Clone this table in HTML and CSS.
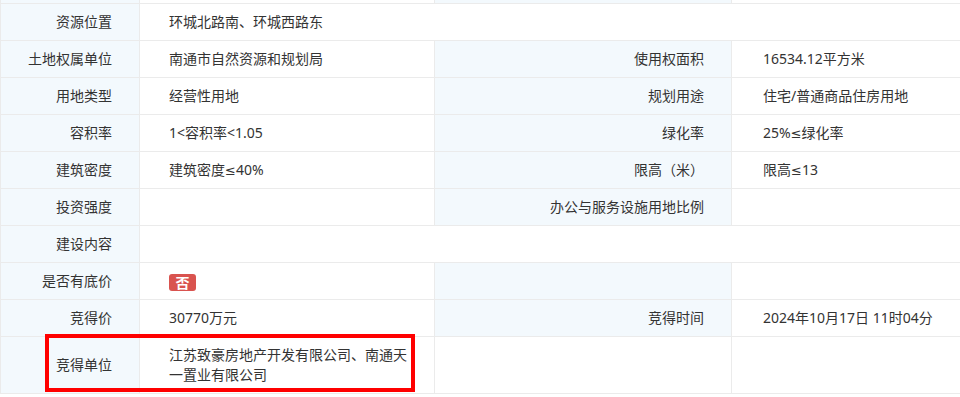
FILE: index.html
```html
<!DOCTYPE html>
<html lang="zh-CN">
<head>
<meta charset="utf-8">
<link rel="stylesheet" href="styles.css">
</head>
<body>
<div class="wrap">
<table class="info">
  <colgroup>
    <col class="c1"><col class="c2"><col class="c3"><col class="c4">
  </colgroup>
  <tr><td class="lb"></td><td class="v2"></td><td class="lb"></td><td class="v4"></td></tr>
  <tr><td class="lb">资源位置</td><td class="v2 last" colspan="3">环城北路南、环城西路东</td></tr>
  <tr><td class="lb">土地权属单位</td><td class="v2">南通市自然资源和规划局</td><td class="lb">使用权面积</td><td class="v4">16534.12平方米</td></tr>
  <tr><td class="lb">用地类型</td><td class="v2">经营性用地</td><td class="lb">规划用途</td><td class="v4">住宅/普通商品住房用地</td></tr>
  <tr><td class="lb">容积率</td><td class="v2">1&lt;容积率&lt;1.05</td><td class="lb">绿化率</td><td class="v4">25%<span class="sym">≤</span>绿化率</td></tr>
  <tr><td class="lb">建筑密度</td><td class="v2">建筑密度<span class="sym">≤</span>40%</td><td class="lb">限高（米）</td><td class="v4">限高<span class="sym">≤</span>13</td></tr>
  <tr><td class="lb">投资强度</td><td class="v2"></td><td class="lb">办公与服务设施用地比例</td><td class="v4"></td></tr>
  <tr><td class="lb">建设内容</td><td class="v2 last" colspan="3"></td></tr>
  <tr><td class="lb">是否有底价</td><td class="v2"><span class="badge">否</span></td><td class="lb"></td><td class="v4"></td></tr>
  <tr><td class="lb">竞得价</td><td class="v2">30770万元</td><td class="lb">竞得时间</td><td class="v4">2024年10月17日 11时04分</td></tr>
  <tr class="tall"><td class="lb">竞得单位</td><td class="v2">江苏致豪房地产开发有限公司、南通天一置业有限公司</td><td class="v2"></td><td class="v4"></td></tr>
</table>
<div class="mark"></div>
</div>
</body>
</html>
```

FILE: styles.css
```css
html, body {
  margin: 0;
  padding: 0;
  background: #fff;
  overflow: hidden;
}
body {
  width: 960px;
  height: 397px;
  font-family: "Noto Sans", "Noto Sans CJK SC", sans-serif;
  font-size: 14px;
  color: #333;
}
.wrap {
  position: relative;
  margin-top: -34px;
  width: 960px;
}
.info {
  border-collapse: collapse;
  table-layout: fixed;
  width: 960px;
}
.c1 { width: 139px; }
.c2 { width: 295px; }
.c3 { width: 297px; }
.c4 { width: 229px; }
.info td {
  border: 1px solid #ebebeb;
  height: 37px;
  padding: 0;
  line-height: 20px;
  vertical-align: middle;
  box-sizing: border-box;
}
.info td.v4, .info td.last {
  border-right: 0;
}
.info tr.tall td {
  height: 57px;
  padding-top: 8px;
  padding-bottom: 8px;
}
.info td.lb {
  background: #f3f9fd;
  text-align: right;
  padding-right: 27px;
}
.info td.v2 {
  padding-left: 29px;
  padding-right: 14px;
}
.info td.v4 {
  padding-left: 31px;
}
.sym {
  font-family: "DejaVu Sans", sans-serif;
  font-size: 13px;
}
.badge {
  display: inline-block;
  width: 27px;
  height: 17px;
  line-height: 17px;
  text-align: center;
  background: #d9534f;
  color: #fff;
  border-radius: 3px;
  font-family: "Noto Sans CJK SC", sans-serif;
  font-size: 14px;
  font-weight: 700;
  vertical-align: middle;
}
.mark {
  position: absolute;
  left: 45px;
  top: 368px;
  width: 370px;
  height: 58px;
  box-sizing: border-box;
  border: 4px solid #ff0000;
}
```
